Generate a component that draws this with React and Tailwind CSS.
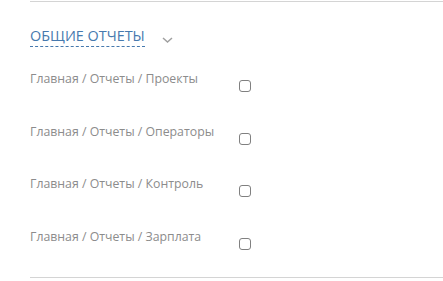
import React from 'react'

const rows = [
  'Главная / Отчеты / Проекты',
  'Главная / Отчеты / Операторы',
  'Главная / Отчеты / Контроль',
  'Главная / Отчеты / Зарплата',
]

const App = () => {
  return (
    <div className="w-[443px] h-[281px] bg-white overflow-hidden font-['Open_Sans',sans-serif]">
      <div className="ml-[30px] pt-px">
        <div className="border-t border-[#d4d4d4]" />

        {/* Section title */}
        <div className="mt-[24px] flex items-start">
          <span className="text-[14.4px] leading-[19px] text-[#4679ae] border-b border-dashed border-[#4679ae] pb-px">
            ОБЩИЕ ОТЧЕТЫ
          </span>
          <svg className="ml-[17px] mt-[11px]" width="11" height="6" viewBox="0 0 11 6" fill="none">
            <path d="M1 1l4.5 4L10 1" stroke="#a0a0a0" strokeWidth="1.5" />
          </svg>
        </div>

        <div className="mt-[24px] flex flex-col gap-[31.5px]">
          {rows.map((label) => (
            <div key={label} className="flex h-[21px]">
              <span className="w-[209px] text-[12.3px] leading-[16px] text-[#8c8c8c]">{label}</span>
              <span className="mt-[9px] w-[12px] h-[12px] rounded-[3px] border border-[#808080] bg-white" />
            </div>
          ))}
        </div>

        <div className="mt-[27.5px] border-t border-[#d4d4d4]" />
      </div>
    </div>
  )
}

export default App
